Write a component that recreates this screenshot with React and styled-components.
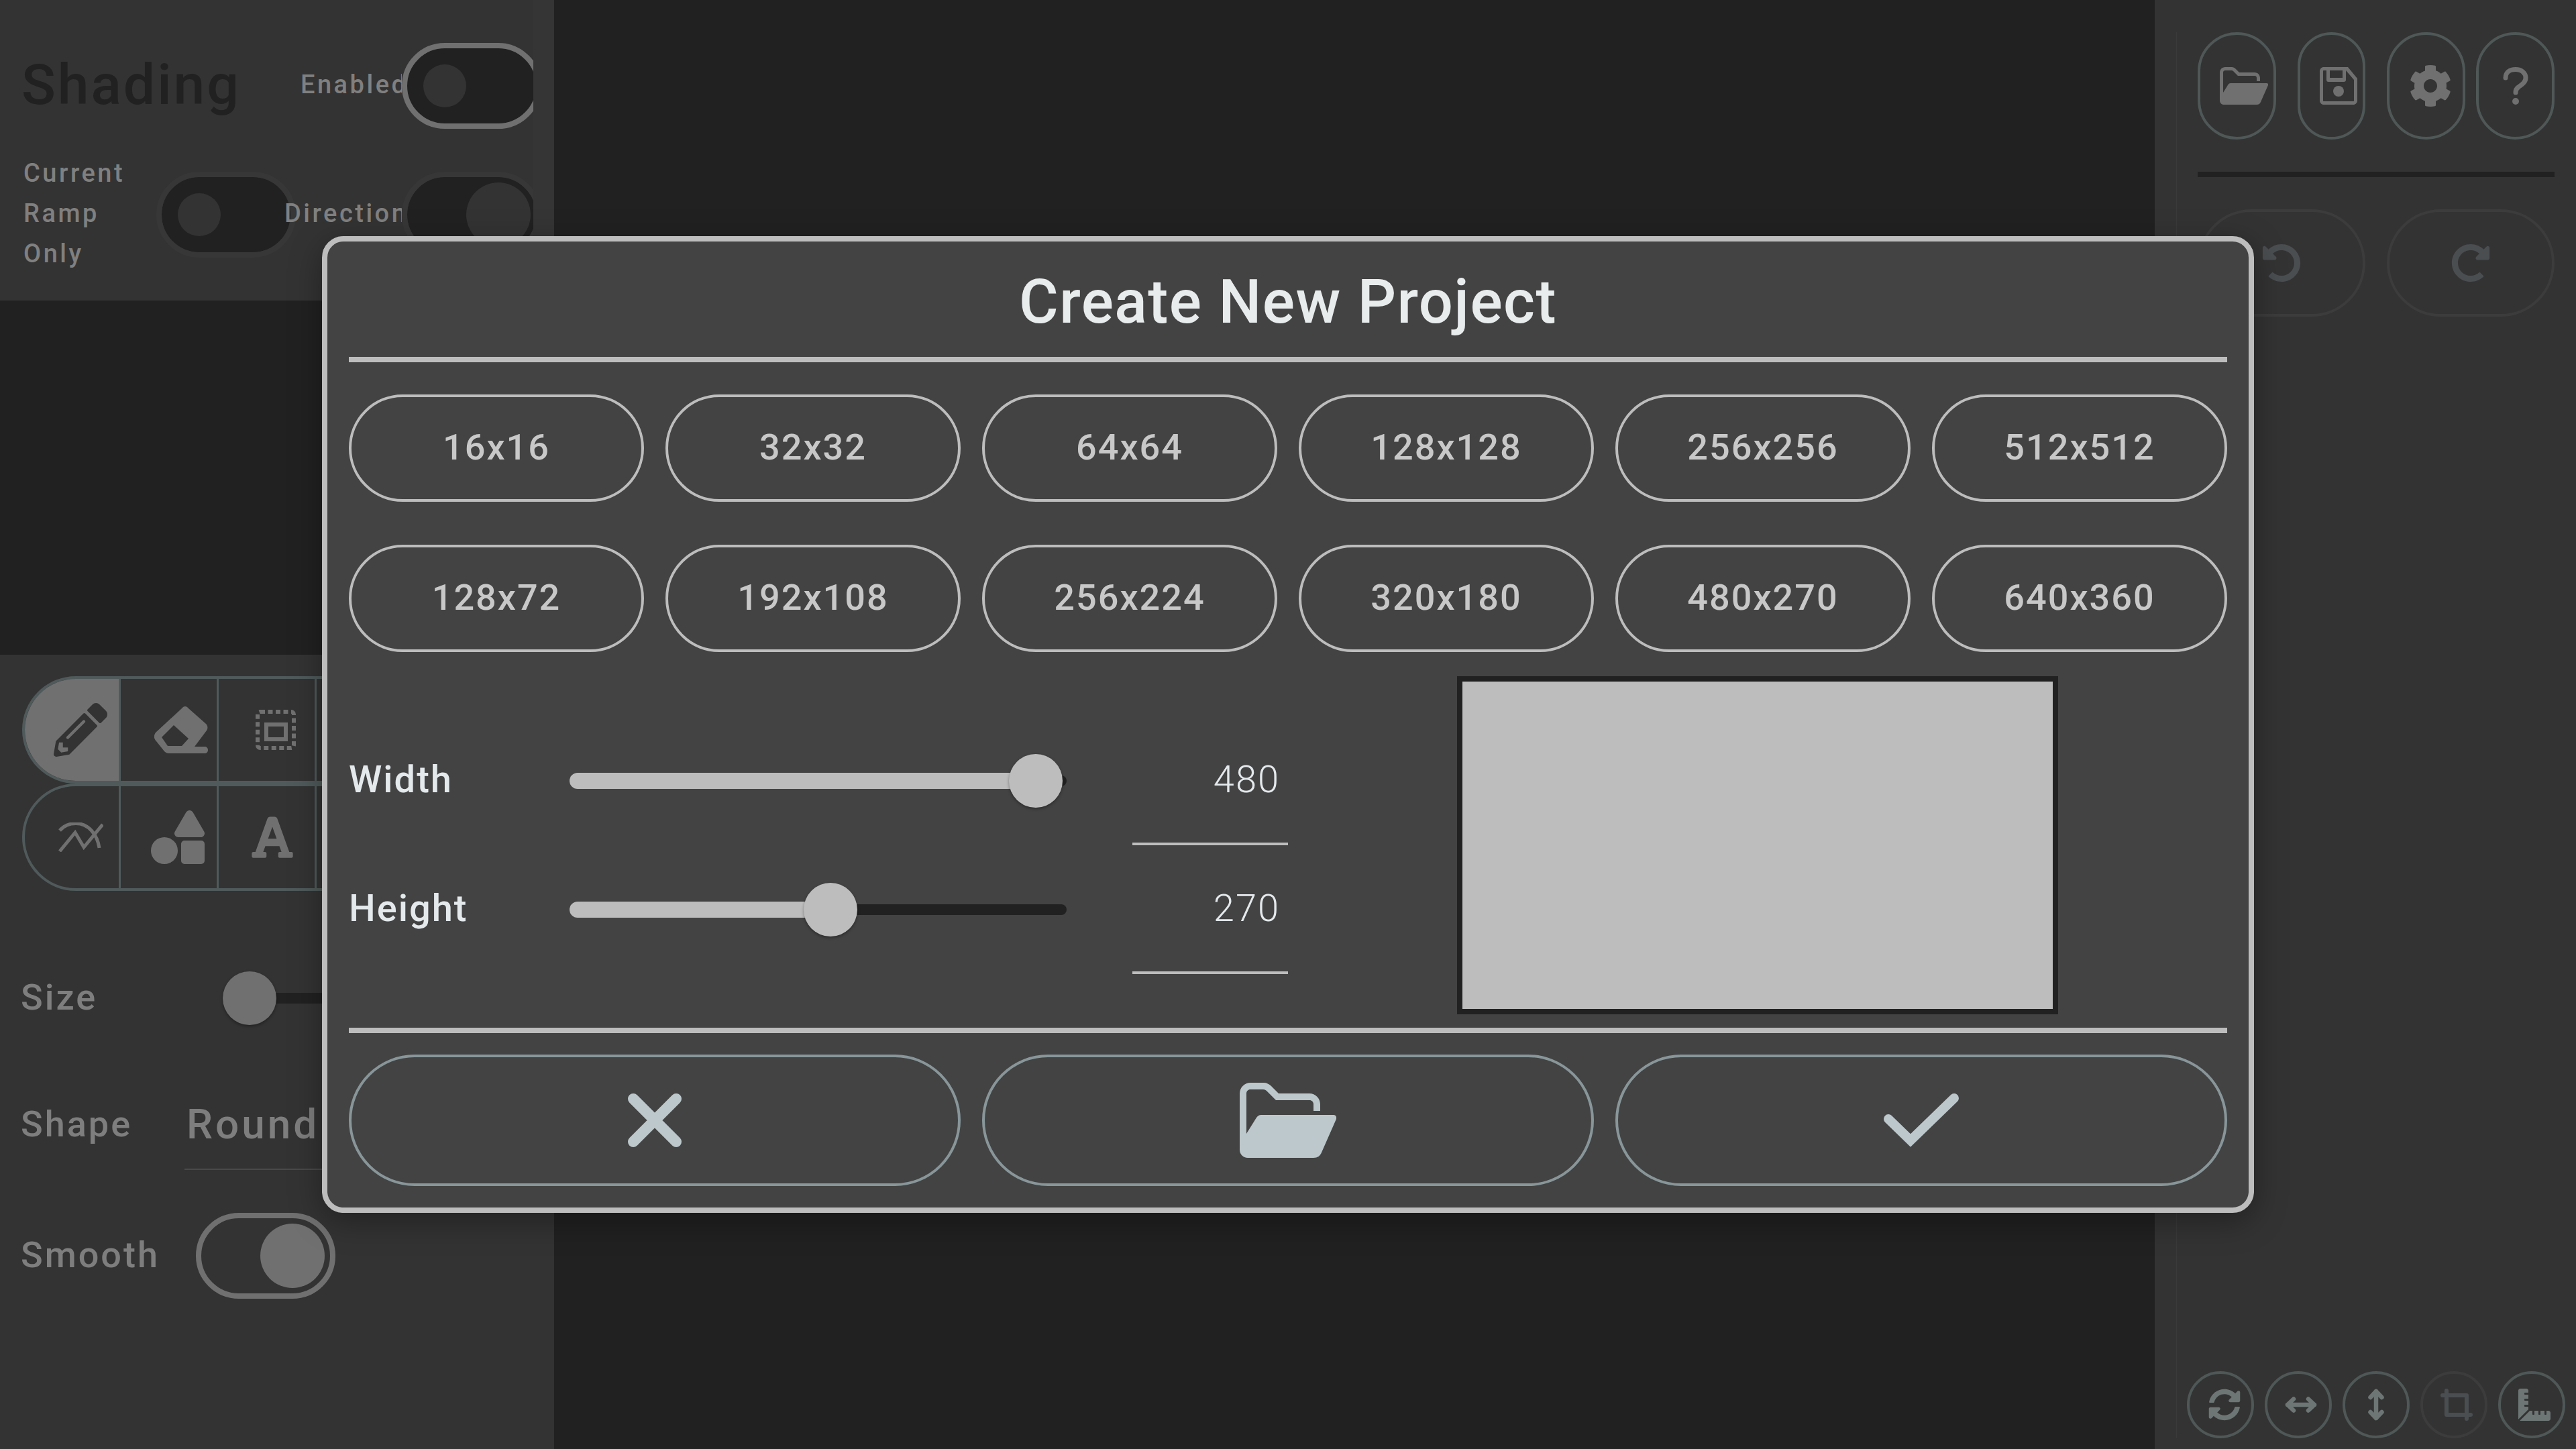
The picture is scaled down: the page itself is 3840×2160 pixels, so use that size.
import styled, { createGlobalStyle } from "styled-components";
import { FaCog, FaFont, FaPencilAlt, FaRedoAlt, FaRulerCombined, FaShapes, FaSyncAlt, FaUndoAlt } from "react-icons/fa";

const FONT = `Roboto, "Noto Sans", sans-serif`;

const GlobalStyle = createGlobalStyle`
  html, body {
    margin: 0;
    background: #212121;
    overflow: hidden;
  }
  * {
    box-sizing: border-box;
  }
`;

const Page = styled.div`
  position: relative;
  display: flex;
  width: 3840px;
  height: 2160px;
  background: #212121;
  font-family: ${FONT};
  color: #808080;
  overflow: hidden;
`;

/* left panel */

const LeftColumn = styled.div`
  display: flex;
  flex-direction: column;
  width: 826px;
  flex-shrink: 0;
`;

const ShadingSection = styled.section`
  height: 448px;
  background: #353535;
`;

const ShadingGrid = styled.div`
  display: grid;
  grid-template-columns: 198px 191px 175px 208px;
  grid-template-rows: 128px 128px;
  row-gap: 64px;
  align-items: center;
  width: 795px;
  height: 448px;
  padding: 64px 0 0 35px;
  background: #333333;
  overflow: hidden;
`;

const Heading = styled.h2`
  grid-column: 1 / 3;
  margin: 0 0 4px;
  font-size: 84px;
  font-weight: 500;
  letter-spacing: 3px;
  text-indent: -3px;
  color: #212121;
`;

const SmallLabel = styled.div`
  margin-bottom: 4px;
  font-size: 38px;
  font-weight: 500;
  line-height: 60px;
  letter-spacing: 3.5px;
  white-space: nowrap;
  overflow: hidden;
  padding-left: ${({ $indent }) => $indent || 0}px;
`;

const Toggle = styled.div`
  display: flex;
  align-items: center;
  justify-content: ${({ $on }) => ($on ? "flex-end" : "flex-start")};
  width: 208px;
  height: 128px;
  padding: 0 ${({ $on }) => ($on ? 8 : 24)}px;
  border: 8px solid ${({ $ring }) => $ring};
  border-radius: 64px;
  background: ${({ $fill }) => $fill};
  background-clip: padding-box;
  flex-shrink: 0;
`;

const ToggleKnob = styled.div`
  width: ${({ $on }) => ($on ? 96 : 64)}px;
  height: ${({ $on }) => ($on ? 96 : 64)}px;
  border-radius: 50%;
  background: ${({ $color }) => $color};
`;

const PanelGap = styled.div`
  height: 528px;
`;

const ToolSection = styled.section`
  flex: 1;
  display: flex;
  flex-direction: column;
  padding: 32px 0 0 33px;
  background: #333333;
`;

const ToolRow = styled.div`
  display: flex;
  width: 760px;
  height: 160px;
  border: 4px solid #505a5a;
  border-radius: 80px 0 0 80px;
  overflow: hidden;
`;

const ToolCell = styled.div`
  display: flex;
  align-items: center;
  justify-content: center;
  width: ${({ $first }) => ($first ? 143 : 146)}px;
  height: 100%;
  flex-shrink: 0;
  padding-left: ${({ $nudge }) => $nudge}px;
  border-right: 3px solid #505a5a;
  background: ${({ $active }) => ($active ? "#707070" : "transparent")};
  color: ${({ $active }) => ($active ? "#333333" : "#707070")};
`;

const SizeRow = styled.div`
  display: flex;
  align-items: center;
  height: 80px;
  margin-top: 120px;
`;

const FieldLabel = styled.div`
  width: ${({ $width }) => $width}px;
  flex-shrink: 0;
  margin-bottom: 2px;
  font-size: 54px;
  font-weight: 500;
  line-height: 56px;
  letter-spacing: 3px;
  text-indent: -2px;
  color: #7e7e7e;
`;

const ShapeRow = styled.div`
  display: flex;
  align-items: flex-start;
  height: 96px;
  margin-top: 120px;
`;

const ShapeSelect = styled.div`
  width: 520px;
  height: 96px;
  padding-left: 3px;
  border-bottom: 2px solid #4a4a4a;
  font-size: 62px;
  font-weight: 500;
  line-height: 56px;
  letter-spacing: 4px;
  color: #7e7e7e;
`;

const SmoothRow = styled.div`
  display: flex;
  align-items: center;
  margin-top: 64px;
`;

/* slider, used in the panel and in the dialog */

const SliderBox = styled.div`
  position: relative;
  display: flex;
  align-items: center;
  width: ${({ $width }) => $width}px;
  height: 80px;
`;

const SliderRail = styled.div`
  width: 100%;
  height: 16px;
  border-radius: 8px;
  background: #212121;
`;

const SliderFill = styled.div`
  position: absolute;
  left: 0;
  top: 28px;
  height: 24px;
  border-radius: 12px 0 0 12px;
  background: #bdbdbd;
`;

const SliderThumb = styled.div`
  position: absolute;
  top: 0;
  width: 80px;
  height: 80px;
  margin-left: -40px;
  border-radius: 50%;
  background: ${({ $color }) => $color};
  box-shadow: 0 2px 4px rgba(0, 0, 0, 0.35);
`;

const Slider = ({ width, percent, color }) => (
  <SliderBox $width={width}>
    <SliderRail />
    {percent > 0 && <SliderFill style={{ width: `${percent}%` }} />}
    <SliderThumb $color={color} style={{ left: `${percent}%` }} />
  </SliderBox>
);

/* middle and right panel */

const Workspace = styled.main`
  flex: 1;
`;

const RightColumn = styled.div`
  display: flex;
  flex-direction: column;
  width: 628px;
  flex-shrink: 0;
  padding: 48px 32px 16px 32px;
  background: #333333;
`;

const RightInner = styled.div`
  display: flex;
  flex-direction: column;
  justify-content: space-between;
  height: 100%;
  padding-left: 31px;
  border-left: 1px solid #3a3a3a;
`;

const FileRow = styled.div`
  display: flex;
  gap: 16px;
`;

const PanelButton = styled.div`
  display: flex;
  align-items: center;
  justify-content: center;
  width: ${({ $width }) => $width}px;
  height: 160px;
  margin: 0 ${({ $inset }) => $inset || 0}px;
  padding-left: ${({ $nudge }) => $nudge || 0}px;
  border: 4px solid ${({ $off }) => ($off ? "#3c3c3c" : "#4f5757")};
  border-radius: 80px;
  color: ${({ $off }) => ($off ? "#4a4e50" : "#707070")};
  flex-shrink: 0;
`;

const PanelRule = styled.div`
  height: 8px;
  margin: 48px 0;
  background: #212121;
`;

const HistoryRow = styled.div`
  display: flex;
  gap: 32px;
`;

const TransformRow = styled.div`
  display: flex;
  gap: 16px;
  margin-left: -16px;
`;

const RoundButton = styled.div`
  display: flex;
  align-items: center;
  justify-content: center;
  width: 100px;
  height: 100px;
  padding-left: ${({ $nudge }) => $nudge || 0}px;
  border: 4px solid ${({ $off }) => ($off ? "#3c3c3c" : "#4f5757")};
  border-radius: 50%;
  color: ${({ $off }) => ($off ? "#4a4e50" : "#6d7575")};
  flex-shrink: 0;
`;

/* dialog */

const Dialog = styled.div`
  position: absolute;
  left: 480px;
  top: 352px;
  width: 2880px;
  height: 1456px;
  padding: 0 32px;
  border: 8px solid #bdbdbd;
  border-radius: 32px;
  background: #434343;
  box-shadow: 0 12px 48px rgba(0, 0, 0, 0.35);
`;

const DialogTitle = styled.h1`
  display: flex;
  align-items: center;
  justify-content: center;
  height: 172px;
  margin: 0;
  padding-top: 8px;
  font-size: 90px;
  font-weight: 500;
  letter-spacing: 1.5px;
  color: #e8eced;
`;

const DialogRule = styled.div`
  height: 8px;
  background: #bdbdbd;
`;

const PresetGrid = styled.div`
  display: grid;
  grid-template-columns: repeat(6, 440px);
  grid-auto-rows: 160px;
  gap: 64px 32px;
  margin-top: 48px;
`;

const PresetButton = styled.button`
  padding: 0 0 4px;
  border: 4px solid #bdbdbd;
  border-radius: 80px;
  background: transparent;
  font-family: ${FONT};
  font-size: 54px;
  font-weight: 500;
  letter-spacing: 2px;
  color: #c8c8c8;
`;

const FormArea = styled.div`
  display: flex;
  height: 504px;
  margin-top: 36px;
  margin-bottom: 20px;
`;

const SizeForm = styled.div`
  display: grid;
  grid-template-columns: 329px 741px 330px;
  grid-auto-rows: 192px;
  width: 1652px;
  padding-top: 60px;
`;

const RowLabel = styled.div`
  display: flex;
  align-items: center;
  padding-bottom: 4px;
  font-size: 56px;
  font-weight: 500;
  letter-spacing: 2px;
  color: #e4e9eb;
`;

const SliderCell = styled.div`
  display: flex;
  align-items: center;
`;

const ValueField = styled.div`
  display: flex;
  align-items: center;
  justify-content: flex-end;
  margin-left: 98px;
  padding-right: 12px;
  border-bottom: 4px solid #bdbdbd;
  font-size: 56px;
  font-weight: 300;
  letter-spacing: 2px;
  color: #e4e9eb;
`;

const Preview = styled.div`
  width: 896px;
  height: 504px;
  border: 8px solid #212121;
  background: #bdbdbd;
`;

const ActionGrid = styled.div`
  display: grid;
  grid-template-columns: repeat(3, 912px);
  gap: 32px;
  margin-top: 32px;
`;

const ActionButton = styled.button`
  display: flex;
  align-items: center;
  justify-content: center;
  height: 196px;
  border: 4px solid #88969a;
  border-radius: 98px;
  background: transparent;
  color: #bdc8cc;
`;

/* drawn icons */

const FolderIcon = ({ width }) => (
  <svg width={width} viewBox="0 0 72 56" fill="currentColor">
    <path d="M0 8C0 3.6 3.6 0 8 0H18C20 0 22 1 23.5 2.5L29 8H52C56.4 8 60 11.6 60 16V21H55V16C55 14.3 53.7 13 52 13H27L20 6C19.3 5.4 18.5 5 17.5 5H8C6.3 5 5 6.3 5 8V38L12.5 26C13.5 24.8 14.5 24 16 24H70C71.5 24 72.5 25.5 72 27L61 52C60 54.5 58 56 55 56H6C2.7 56 0 53.3 0 50Z" />
  </svg>
);

const SaveIcon = () => (
  <svg width="56" height="56" viewBox="0 0 56 56" fill="currentColor">
    <path
      fillRule="evenodd"
      d="M6 0H42L56 17V50C56 53.3 53.3 56 50 56H6C2.7 56 0 53.3 0 50V6C0 2.7 2.7 0 6 0ZM6 5C5.4 5 5 5.4 5 6V50C5 50.6 5.4 51 6 51H50C50.6 51 51 50.6 51 50V19L39 5V19C39 21 38 22 36 22H13C11 22 10 21 10 19V5ZM15 5V16H34V5Z"
    />
    <circle cx="28" cy="36" r="8" />
  </svg>
);

const HelpIcon = () => (
  <svg width="38" height="56" viewBox="0 0 38 56" fill="none" stroke="currentColor" strokeWidth="7" strokeLinecap="round">
    <path d="M4 16C4 8 10 3.5 19 3.5C28 3.5 34 9 34 16C34 23 28 26 23 30C20 32 19 35 19 38" />
    <circle cx="19" cy="51" r="5" fill="currentColor" stroke="none" />
  </svg>
);

const EraserIcon = () => (
  <svg width="80" height="70" viewBox="0 0 80 70" fill="currentColor">
    <path
      fillRule="evenodd"
      d="M41 3C44 -1 48 -1 51 3L77 26C80 29 80 33 78 36L60 60H75C78 60 80 62 80 65C80 68 78 70 75 70H22C19 70 17 69 15 67L3 52C-1 48 -1 43 2 39ZM29 28L11 46L20 59H41L51 48Z"
    />
  </svg>
);

const SelectIcon = () => (
  <svg width="60" height="60" viewBox="0 0 60 60" fill="none" stroke="currentColor" strokeWidth="6">
    <rect x="3" y="3" width="54" height="54" rx="4" strokeDasharray="7 4.5" />
    <rect x="16" y="22" width="29" height="22" />
  </svg>
);

const CurvesIcon = () => (
  <svg width="67" height="44" viewBox="0 0 67 44" fill="none" stroke="currentColor" strokeWidth="5">
    <path d="M2 12C10 3 18 1.5 26 1.5C45 1.5 58 18 61 38" />
    <path d="M2 43L25 15L38 37L66 3" />
  </svg>
);

const HorizontalIcon = () => (
  <svg width="48" height="24" viewBox="0 0 48 24" fill="none" stroke="currentColor" strokeWidth="6.5" strokeLinecap="round" strokeLinejoin="round">
    <path d="M4 12H44M13 3.5L4 12L13 20.5M35 3.5L44 12L35 20.5" />
  </svg>
);

const VerticalIcon = () => (
  <svg width="24" height="48" viewBox="0 0 24 48" fill="none" stroke="currentColor" strokeWidth="6.5" strokeLinecap="round" strokeLinejoin="round">
    <path d="M12 4V44M3.5 13L12 4L20.5 13M3.5 35L12 44L20.5 35" />
  </svg>
);

const CropIcon = () => (
  <svg width="48" height="48" viewBox="0 0 48 48" fill="none" stroke="currentColor" strokeWidth="6" strokeLinecap="round" strokeLinejoin="round">
    <path d="M9 3V39H45M3 10H39V45" />
  </svg>
);

const CloseIcon = () => (
  <svg width="80" height="80" viewBox="0 0 80 80" fill="none" stroke="currentColor" strokeWidth="16" strokeLinecap="round">
    <path d="M8 8L72 72M72 8L8 72" />
  </svg>
);

const CheckIcon = () => (
  <svg width="112" height="80" viewBox="0 0 112 80" fill="none" stroke="currentColor" strokeWidth="14" strokeLinecap="round">
    <path d="M7 38L40 70L105 7" />
  </svg>
);

const presets = [
  "16x16", "32x32", "64x64", "128x128", "256x256", "512x512",
  "128x72", "192x108", "256x224", "320x180", "480x270", "640x360",
];

export default function App() {
  return (
    <>
      <GlobalStyle />
      <Page>
        <LeftColumn>
          <ShadingSection>
            <ShadingGrid>
              <Heading>Shading</Heading>
              <SmallLabel $indent={24}>Enabled</SmallLabel>
              <Toggle $ring="#707070" $fill="#212121">
                <ToggleKnob $color="#333333" />
              </Toggle>
              <SmallLabel>
                Current
                <br />
                Ramp
                <br />
                Only
              </SmallLabel>
              <Toggle $ring="#373737" $fill="#212121">
                <ToggleKnob $color="#333333" />
              </Toggle>
              <SmallLabel>Direction</SmallLabel>
              <Toggle $ring="#373737" $fill="#212121" $on>
                <ToggleKnob $color="#333333" $on />
              </Toggle>
            </ShadingGrid>
          </ShadingSection>
          <PanelGap />
          <ToolSection>
            <ToolRow>
              <ToolCell $first $active $nudge={26}>
                <FaPencilAlt size={80} />
              </ToolCell>
              <ToolCell $nudge={37}>
                <EraserIcon />
              </ToolCell>
              <ToolCell $nudge={26}>
                <SelectIcon />
              </ToolCell>
            </ToolRow>
            <ToolRow>
              <ToolCell $first $nudge={26}>
                <CurvesIcon />
              </ToolCell>
              <ToolCell $nudge={26}>
                <FaShapes size={80} />
              </ToolCell>
              <ToolCell $nudge={16}>
                <FaFont size={70} />
              </ToolCell>
            </ToolRow>
            <SizeRow>
              <FieldLabel $width={339}>Size</FieldLabel>
              <Slider width={500} percent={0} color="#707070" />
            </SizeRow>
            <ShapeRow>
              <FieldLabel $width={242}>Shape</FieldLabel>
              <ShapeSelect>Round</ShapeSelect>
            </ShapeRow>
            <SmoothRow>
              <FieldLabel $width={259}>Smooth</FieldLabel>
              <Toggle $ring="#707070" $fill="transparent" $on>
                <ToggleKnob $color="#707070" $on />
              </Toggle>
            </SmoothRow>
          </ToolSection>
        </LeftColumn>

        <Workspace />

        <RightColumn>
          <RightInner>
            <div>
              <FileRow>
                <PanelButton $width={117} $nudge={20}>
                  <FolderIcon width={72} />
                </PanelButton>
                <PanelButton $width={101} $inset={16} $nudge={20}>
                  <SaveIcon />
                </PanelButton>
                <PanelButton $width={117} $nudge={12}>
                  <FaCog size={64} />
                </PanelButton>
                <PanelButton $width={117}>
                  <HelpIcon />
                </PanelButton>
              </FileRow>
              <PanelRule />
              <HistoryRow>
                <PanelButton $width={250} $off>
                  <FaUndoAlt size={58} />
                </PanelButton>
                <PanelButton $width={250} $off>
                  <FaRedoAlt size={58} />
                </PanelButton>
              </HistoryRow>
            </div>
            <TransformRow>
              <RoundButton $nudge={12}>
                <FaSyncAlt size={48} />
              </RoundButton>
              <RoundButton $nudge={8}>
                <HorizontalIcon />
              </RoundButton>
              <RoundButton>
                <VerticalIcon />
              </RoundButton>
              <RoundButton $off $nudge={8}>
                <CropIcon />
              </RoundButton>
              <RoundButton $nudge={8}>
                <FaRulerCombined size={48} />
              </RoundButton>
            </TransformRow>
          </RightInner>
        </RightColumn>

        <Dialog>
          <DialogTitle>Create New Project</DialogTitle>
          <DialogRule />
          <PresetGrid>
            {presets.map((label) => (
              <PresetButton key={label}>{label}</PresetButton>
            ))}
          </PresetGrid>
          <FormArea>
            <SizeForm>
              <RowLabel>Width</RowLabel>
              <SliderCell>
                <Slider width={741} percent={93.8} color="#bdbdbd" />
              </SliderCell>
              <ValueField>480</ValueField>
              <RowLabel>Height</RowLabel>
              <SliderCell>
                <Slider width={741} percent={52.5} color="#bdbdbd" />
              </SliderCell>
              <ValueField>270</ValueField>
            </SizeForm>
            <Preview />
          </FormArea>
          <DialogRule />
          <ActionGrid>
            <ActionButton>
              <CloseIcon />
            </ActionButton>
            <ActionButton>
              <FolderIcon width={144} />
            </ActionButton>
            <ActionButton>
              <CheckIcon />
            </ActionButton>
          </ActionGrid>
        </Dialog>
      </Page>
    </>
  );
}
